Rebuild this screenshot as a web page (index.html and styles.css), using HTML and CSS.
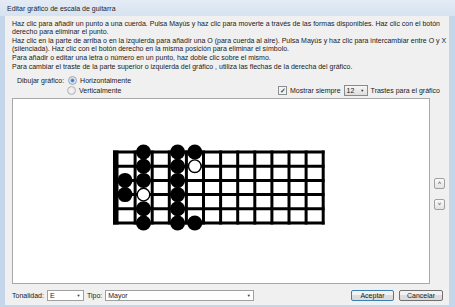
FILE: index.html
```html
<!DOCTYPE html>
<html>
<head>
    <title>Editar gráfico de escala de guitarra</title>
    <link rel="stylesheet" href="styles.css">
</head>
<body>
    <div class="window">
        <div class="titlebar">Editar gráfico de escala de guitarra</div>
        <div class="client">
            <div class="help">
                <p>Haz clic para añadir un punto a una cuerda. Pulsa Mayús y haz clic para moverte a través de las formas disponibles. Haz clic con el botón<br>derecho para eliminar el punto.</p>
                <p>Haz clic en la parte de arriba o en la izquierda para añadir una O (para cuerda al aire). Pulsa Mayús y haz clic para intercambiar entre O y X<br>(silenciada). Haz clic con el botón derecho en la misma posición para eliminar el símbolo.</p>
                <p>Para añadir o editar una letra o número en un punto, haz doble clic sobre el mismo.</p>
                <p>Para cambiar el traste de la parte superior o izquierda del gráfico , utiliza las flechas de la derecha del gráfico.</p>
            </div>

            <div class="draw-opts">
                <div class="opt-row">
                    <span class="opt-label">Dibujar gráfico:</span>
                    <span class="radio checked"></span>
                    <span>Horizontalmente</span>
                </div>
                <div class="opt-row second">
                    <span class="radio"></span>
                    <span>Verticalmente</span>
                    <div class="fret-opts">
                        <span class="checkbox">✓</span>
                        <span>Mostrar siempre</span>
                        <span class="combo combo-frets"><span class="combo-text">12</span><span class="arrow">▼</span></span>
                        <span>Trastes para el gráfico</span>
                    </div>
                </div>
            </div>

            <div class="chart-area">
                <div class="chart">
                    <svg width="416" height="184" viewBox="0 0 416 184">
                        <!-- page coordinates, box starts at 13,98 -->
                        <g transform="translate(-13,-98)">
                            <rect x="113" y="149" width="211" height="74" fill="#fff"/>
                            <g stroke="#000" stroke-width="3">
                                <line x1="113" y1="151" x2="324.5" y2="151"/>
                                <line x1="113" y1="165.2" x2="324.5" y2="165.2"/>
                                <line x1="113" y1="179.4" x2="324.5" y2="179.4"/>
                                <line x1="113" y1="193.6" x2="324.5" y2="193.6"/>
                                <line x1="113" y1="207.8" x2="324.5" y2="207.8"/>
                                <line x1="113" y1="222" x2="324.5" y2="222"/>
                                <line x1="135.1" y1="149.5" x2="135.1" y2="223.5"/>
                                <line x1="152.2" y1="149.5" x2="152.2" y2="223.5"/>
                                <line x1="169.3" y1="149.5" x2="169.3" y2="223.5"/>
                                <line x1="186.4" y1="149.5" x2="186.4" y2="223.5"/>
                                <line x1="203.5" y1="149.5" x2="203.5" y2="223.5"/>
                                <line x1="220.6" y1="149.5" x2="220.6" y2="223.5"/>
                                <line x1="237.7" y1="149.5" x2="237.7" y2="223.5"/>
                                <line x1="254.8" y1="149.5" x2="254.8" y2="223.5"/>
                                <line x1="271.9" y1="149.5" x2="271.9" y2="223.5"/>
                                <line x1="289" y1="149.5" x2="289" y2="223.5"/>
                                <line x1="306.1" y1="149.5" x2="306.1" y2="223.5"/>
                                <line x1="323.2" y1="149.5" x2="323.2" y2="223.5"/>
                            </g>
                            <rect x="113" y="149.5" width="5.5" height="74" fill="#000"/>

                            <!-- fret 1 -->
                            <circle cx="125" cy="179.4" r="7.5"/>
                            <circle cx="125" cy="193.6" r="7.5"/>
                            <!-- fret 2 -->
                            <circle cx="143.5" cy="151" r="7.5"/>
                            <circle cx="143.5" cy="165.2" r="7.5"/>
                            <circle cx="143.5" cy="179.4" r="7.5"/>
                            <circle cx="143.5" cy="193.6" r="6.3" fill="#fff" stroke="#000" stroke-width="1.4"/>
                            <circle cx="143.5" cy="207.8" r="7.5"/>
                            <circle cx="143.5" cy="222" r="7.5"/>
                            <!-- fret 4 -->
                            <circle cx="177.6" cy="151" r="7.5"/>
                            <circle cx="177.6" cy="165.2" r="7.5"/>
                            <circle cx="177.6" cy="179.4" r="7.5"/>
                            <circle cx="177.6" cy="193.6" r="7.5"/>
                            <circle cx="177.6" cy="207.8" r="7.5"/>
                            <circle cx="177.6" cy="222" r="7.5"/>
                            <!-- fret 5 -->
                            <circle cx="194.8" cy="151" r="7.5"/>
                            <circle cx="194.8" cy="165.2" r="6.3" fill="#fff" stroke="#000" stroke-width="1.4"/>
                            <circle cx="194.8" cy="222" r="7.5"/>
                        </g>
                    </svg>
                </div>
                <div class="spin">
                    <span class="spin-btn">˄</span>
                    <span class="spin-btn">˅</span>
                </div>
            </div>

            <div class="footer">
                <span>Tonalidad:</span>
                <span class="combo combo-key"><span class="combo-text">E</span><span class="arrow">▼</span></span>
                <span>Tipo:</span>
                <span class="combo combo-type"><span class="combo-text">Mayor</span><span class="arrow">▼</span></span>
                <span class="spacer"></span>
                <button class="btn default">Aceptar</button>
                <button class="btn">Cancelar</button>
            </div>
        </div>
    </div>
</body>
</html>
```

FILE: styles.css
```css
body {
    margin: 0;
    font-family: "Liberation Sans", Arial, sans-serif;
    font-size: 7px;
    color: #1a1a1a;
}
.window {
    width: 455px;
    height: 307px;
    background: #c5d6eb;
    display: flex;
    flex-direction: column;
}
.titlebar {
    height: 16px;
    line-height: 17px;
    padding-left: 7px;
    background: linear-gradient(#e3ebf5, #d7e3f1);
    color: #1e1e1e;
}
.client {
    flex: 1;
    margin: 0 6px 5px 5px;
    background: #f0f0f0;
    padding: 4px 6px 4px 7px;
    display: flex;
    flex-direction: column;
}
.help p {
    margin: 0 0 1px 0;
    line-height: 8px;
    white-space: nowrap;
}
.draw-opts {
    margin-top: 3px;
}
.opt-row {
    height: 10px;
    display: flex;
    align-items: center;
    padding-left: 5px;
}
.opt-row.second {
    padding-left: 55px;
}
.opt-label {
    margin-right: 4px;
}
.radio {
    width: 7px;
    height: 7px;
    border: 1px solid #b4b4b4;
    border-radius: 50%;
    background: radial-gradient(#f6f6f6, #dedede);
    margin-right: 3px;
}
.radio.checked {
    border-color: #9aa6b4;
    background: radial-gradient(circle, #3a69ad 0, #6a9ad8 1.5px, #e6ecf4 2.5px, #dcdcdc 4px);
}
.fret-opts {
    margin-left: auto;
    margin-right: 3px;
    display: flex;
    align-items: center;
    gap: 3px;
}
.checkbox {
    width: 7px;
    height: 7px;
    border: 1px solid #8e8f8f;
    background: #f3f3f3;
    color: #2a4f8f;
    font-size: 7px;
    line-height: 7px;
    text-align: center;
    font-weight: bold;
}
.combo {
    display: inline-flex;
    align-items: center;
    height: 9px;
    border: 1px solid #a0a0a0;
    background: #fff;
    box-sizing: content-box;
}
.combo-text {
    flex: 1;
    padding-left: 2px;
}
.arrow {
    font-size: 4px;
    width: 9px;
    text-align: center;
    color: #333;
}
.combo-frets {
    width: 22px;
    border-color: #8a8a8a;
    background: linear-gradient(#f6f6f6, #dedede);
}
.combo-key {
    width: 35px;
    margin: 0 3px 0 3px;
}
.combo-type {
    width: 147px;
    margin-left: 3px;
}
.chart-area {
    margin-top: 3px;
    display: flex;
    align-items: center;
}
.chart {
    width: 416px;
    height: 184px;
    border: 1px solid #a8a8a8;
    background: #fff;
}
.chart svg {
    display: block;
}
.spin {
    margin-left: 4px;
    display: flex;
    flex-direction: column;
    gap: 10px;
    padding-top: 5px;
}
.spin-btn {
    width: 9px;
    height: 9px;
    border: 1px solid #a0a0a0;
    border-radius: 2px;
    background: linear-gradient(#fbfbfb, #e2e2e2);
    font-size: 6px;
    line-height: 9px;
    text-align: center;
    color: #333;
}
.footer {
    margin-top: 6px;
    height: 11px;
    display: flex;
    align-items: center;
    padding-left: 0;
}
.spacer {
    flex: 1;
}
.btn {
    font-family: inherit;
    font-size: 7px;
    color: #1a1a1a;
    height: 11px;
    padding: 0;
    border: 1px solid #707070;
    border-radius: 2px;
    background: linear-gradient(#f2f2f2 50%, #dcdcdc 50%);
    line-height: 9px;
}
.btn.default {
    width: 43px;
    border-color: #3c7fb1;
    margin-right: 5px;
}
.btn {
    width: 44px;
}
```
